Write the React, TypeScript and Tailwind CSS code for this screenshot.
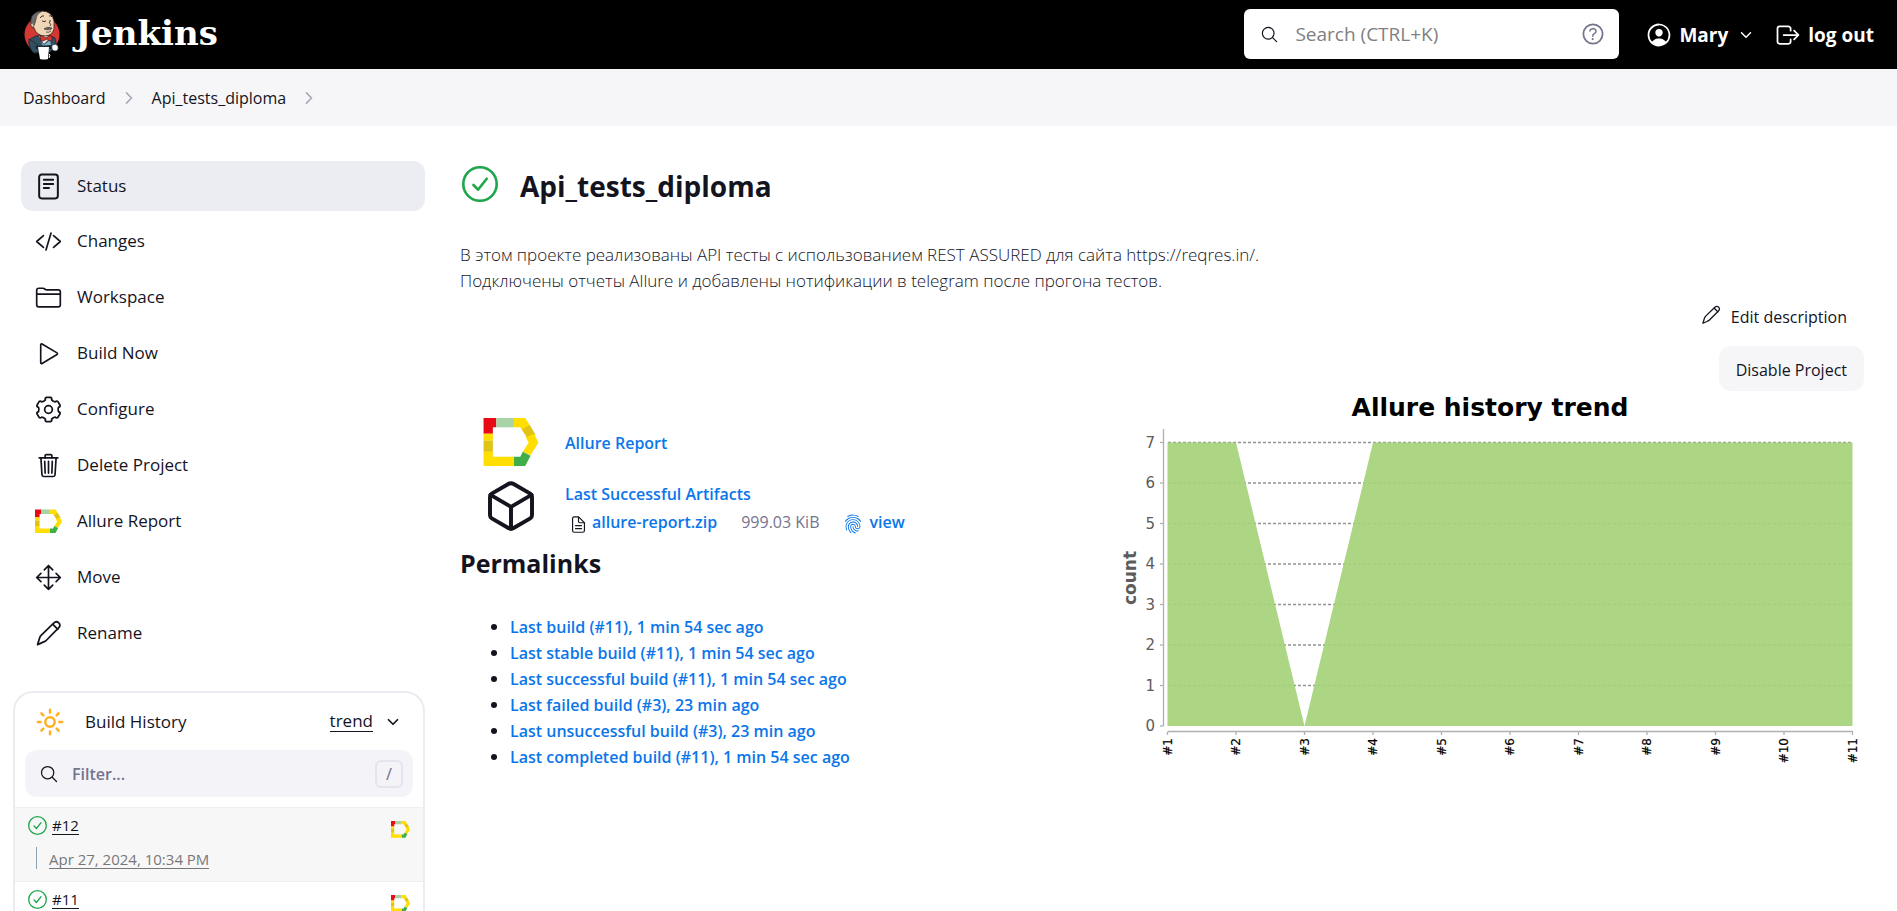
import type { ComponentType, ReactNode } from "react";
import {
  IoChevronDown,
  IoChevronForward,
  IoCodeSlashOutline,
  IoCubeOutline,
  IoDocumentTextOutline,
  IoFingerPrintOutline,
  IoFolderOutline,
  IoHelpCircleOutline,
  IoLogOutOutline,
  IoMoveOutline,
  IoPersonCircleOutline,
  IoSearchOutline,
  IoSunnyOutline,
  IoTrashOutline,
} from "react-icons/io5";

type IconProps = { className?: string };

function JenkinsMascot({ className }: IconProps) {
  return (
    <svg viewBox="0 0 36 50" className={className} aria-hidden="true">
      <ellipse cx="18" cy="24.500" rx="17.500" ry="18" fill="#d33833" />
      <path d="M6 29 L12 26 L24 25 L31 28 L33 37 L28 40 L26 42 L10 43 L5 33 Z" fill="#335061" stroke="#1b2a33" strokeWidth="0.800" />
      <path d="M5 29 Q4 38 10 43 L14 42 L14 35 Z" fill="#335061" stroke="#1b2a33" strokeWidth="0.800" />
      <path d="M15 26 L20 34 L28 26 Z" fill="#f0e6dc" />
      <path d="M17 31 L20 35 L26 30 L27 35 L19 37 Z" fill="#81b0c4" />
      <path d="M8 14 Q8 3 18 1 Q28 1 30 11 L30 19 Q28 26 21 26 Q13 26 10 18 Z" fill="#f0d6b7" stroke="#2b2420" strokeWidth="0.800" />
      <path d="M9 18 Q5 13 8 6 Q12 1 18 1 Q12 4 12 9 L11 13 Z" fill="#6d6b6d" stroke="#2b2420" strokeWidth="0.600" />
      <path d="M8 13 Q6 13 7 16 Q9 18 10 17" fill="#f0d6b7" stroke="#2b2420" strokeWidth="0.700" />
      <path d="M16 8 Q18 5 20 6 M25 6 Q27 5 28 7 M18 11 Q20 12 22 11 M25 11 L27 11 M25 12 Q28 15 26 16" fill="none" stroke="#2b2420" strokeWidth="0.900" />
      <path d="M20 19 Q23 16 28 18 Q27 21 20 19 Z" fill="#6d6b6d" stroke="#2b2420" strokeWidth="0.600" />
      <path d="M22 22 Q25 23 27 21" fill="none" stroke="#2b2420" strokeWidth="0.700" />
      <path d="M16 26 Q20 26 22 28 Q25 25 28 26 L28 31 Q25 31 23 29 Q20 31 17 31 Z" fill="#d33833" stroke="#5c1210" strokeWidth="0.700" />
      <path d="M11 36 L28 35 L30 38 L26 39 L12 39 Z" fill="#1b2a33" />
      <path d="M14 37 L25 37 L24 49 Q20 50 16 49 Z" fill="#ffffff" />
      <path d="M25 44 Q27 44 25 48" fill="none" stroke="#ffffff" strokeWidth="1" />
      <path d="M28 35 Q32 33 34 36 Q35 41 31 41 Q27 41 28 35 Z" fill="#ffffff" stroke="#1b2a33" strokeWidth="0.700" />
    </svg>
  );
}

function StatusIcon({ className }: IconProps) {
  return (
    <svg viewBox="0 0 26 26" className={className} fill="none" stroke="currentColor" strokeLinecap="round" aria-hidden="true">
      <rect x="4" y="1.500" width="18" height="23" rx="2.500" strokeWidth="1.900" />
      <path d="M8.500 6.500h9M8.500 10.500h9M8.500 14.500h5" strokeWidth="1.900" />
    </svg>
  );
}

function PlayIcon({ className }: IconProps) {
  return (
    <svg viewBox="0 0 26 26" className={className} fill="none" stroke="currentColor" strokeWidth="1.600" strokeLinejoin="round" aria-hidden="true">
      <path d="M5.500 4.600v17.200c0 .7.700 1.100 1.300.8l14.400-8.600c.6-.4.600-1.200 0-1.600L6.800 3.800c-.6-.3-1.300.1-1.300.8z" />
    </svg>
  );
}

// Outline of a six-lobed gear, one lobe every 60 degrees.
const gearPath = (() => {
  const at = (deg: number, r: number) => {
    const a = (deg * Math.PI) / 180;
    return `${(13 + r * Math.cos(a)).toFixed(2)} ${(13 + r * Math.sin(a)).toFixed(2)}`;
  };
  const lobes = [0, 1, 2, 3, 4, 5].map((n) => {
    const t = n * 60 - 90;
    return `L${at(t - 18, 9.8)} Q${at(t - 17, 11.8)} ${at(t - 10, 11.8)} L${at(t + 10, 11.8)} Q${at(t + 17, 11.8)} ${at(t + 18, 9.8)} Q${at(t + 30, 8.8)} ${at(t + 42, 9.8)}`;
  });
  return `M${at(-108, 9.8)} ${lobes.join(" ")} Z`;
})();

function GearIcon({ className }: IconProps) {
  return (
    <svg viewBox="0 0 26 26" className={className} fill="none" stroke="currentColor" strokeWidth="1.700" strokeLinejoin="round" aria-hidden="true">
      <path d={gearPath} />
      <circle cx="13" cy="13" r="3.700" />
    </svg>
  );
}

function PencilIcon({ className }: IconProps) {
  return (
    <svg viewBox="0 0 26 26" className={className} fill="none" stroke="currentColor" strokeWidth="1.700" strokeLinecap="round" strokeLinejoin="round" aria-hidden="true">
      <path d="M2.500 23.700l2-6.600c.3-1 .8-1.900 1.600-2.600L18 3c1.500-1.400 3.600-1.500 4.900-.2s1.200 3.400-.2 4.900L11 19.500c-.7.800-1.600 1.300-2.600 1.600z M17 4l5 5" />
    </svg>
  );
}

function AllureIcon({ className }: IconProps) {
  return (
    <svg viewBox="0 0 56 50" className={className} aria-hidden="true">
      <path d="M0 0h13v9.500H9.500V16H0z" fill="#e60b15" />
      <path d="M13 0h18v9.500H13z" fill="#a8d3a6" />
      <path d="M31 0h11.500l4.500 7-7.500 5.500-2-3H31z" fill="#ffde00" />
      <path d="M47 7l6 10-8 4-6-9z" fill="#e0c313" />
      <path d="M51.500 16L56 25 48 38l-8-3.500L46 25l-3-5z" fill="#ffde00" />
      <path d="M40 34.500l8 4L42.500 49H31v-9.500h6.500z" fill="#3fae49" />
      <path d="M0 16h9.500v7H0z" fill="#ffde00" />
      <path d="M0 23h9.500v11.500H0z" fill="#e0c313" />
      <path d="M0 34.500h9.500v5H31V49H0z" fill="#ffde00" />
    </svg>
  );
}

function SuccessIcon({ className, stroke }: IconProps & { stroke: number }) {
  return (
    <svg viewBox="0 0 36 36" className={className} fill="none" stroke="#1ea64b" strokeWidth={stroke} strokeLinecap="round" strokeLinejoin="round" role="img" aria-label="Success">
      <circle cx="18" cy="18" r="16.700" />
      <path d="M11.500 19l4.500 4.700 8.700-11" />
    </svg>
  );
}

const tasks: { label: string; icon: ComponentType<IconProps> }[] = [
  { label: "Status", icon: StatusIcon },
  { label: "Changes", icon: IoCodeSlashOutline },
  { label: "Workspace", icon: IoFolderOutline },
  { label: "Build Now", icon: PlayIcon },
  { label: "Configure", icon: GearIcon },
  { label: "Delete Project", icon: IoTrashOutline },
  { label: "Allure Report", icon: AllureIcon },
  { label: "Move", icon: IoMoveOutline },
  { label: "Rename", icon: PencilIcon },
];

const permalinks = [
  "Last build (#11), 1 min 54 sec ago",
  "Last stable build (#11), 1 min 54 sec ago",
  "Last successful build (#11), 1 min 54 sec ago",
  "Last failed build (#3), 23 min ago",
  "Last unsuccessful build (#3), 23 min ago",
  "Last completed build (#11), 1 min 54 sec ago",
];

const counts = [7, 7, 0, 7, 7, 7, 7, 7, 7, 7, 7];

function TrendChart() {
  const x = (i: number) => 55.5 + i * 68.5;
  const y = (v: number) => 335 - v * 40.5;
  const area = `M${x(0)} ${y(0)} ${counts.map((v, i) => `L${x(i)} ${y(v)}`).join(" ")} L${x(10)} ${y(0)} Z`;
  return (
    <svg viewBox="0 0 752 380" className="w-full max-w-[752px]" role="img" aria-label="Allure history trend" fontFamily="'DejaVu Sans', sans-serif">
      <text x="378" y="25" textAnchor="middle" fontSize="25" fontWeight="700" fill="#000">
        Allure history trend
      </text>
      {counts.slice(0, 7).map((_, i) => (
        <path key={i} d={`M56 ${y(i + 1)}H740`} stroke="#949494" strokeWidth="1.300" strokeDasharray="3 2" />
      ))}
      <path d={area} fill="#a5d279" fillOpacity="0.920" />
      <path d="M51.500 38V335M56 340.500H741" stroke="#b0b0b0" strokeWidth="1.300" fill="none" />
      {[0, 1, 2, 3, 4, 5, 6, 7].map((v) => (
        <g key={v}>
          <path d={`M48 ${y(v)}H51.500`} stroke="#b0b0b0" strokeWidth="1.300" />
          <text x="43" y={y(v) + 5} textAnchor="end" fontSize="15" fill="#5c5c5c">
            {v}
          </text>
        </g>
      ))}
      {counts.map((_, i) => (
        <g key={i}>
          <path d={`M${x(i)} 340.500v3.500`} stroke="#b0b0b0" strokeWidth="1.300" />
          <text transform={`translate(${x(i) + 4} 347) rotate(-90)`} textAnchor="end" fontSize="12" fill="#000" stroke="#000" strokeWidth="0.200">
            #{i + 1}
          </text>
        </g>
      ))}
      <text transform="translate(24 187) rotate(-90)" textAnchor="middle" fontSize="17" fontWeight="700" fill="#5c5c5c">
        count
      </text>
    </svg>
  );
}

function BlueLink({ children }: { children: ReactNode }) {
  return (
    <a href="#" className="text-base leading-[26px] font-semibold text-[#0b76ea]">
      {children}
    </a>
  );
}

export default function App() {
  return (
    <div className="h-screen overflow-hidden bg-white font-['Open_Sans','Noto_Sans',sans-serif] text-[17px] leading-[26px] text-[#14141f]">
      <header className="flex h-[69px] items-center bg-black pr-[23px] pl-6 text-white">
        <a href="#" className="flex items-center gap-[15px]">
          <JenkinsMascot className="h-[50px] w-9" />
          <span className="pb-1 font-['DejaVu_Serif',serif] text-[34px] leading-10 font-bold">Jenkins</span>
        </a>
        <div className="mb-px ml-auto flex h-[50px] w-[375px] items-center rounded-md bg-white pr-3 pl-4 text-[#14141f]">
          <IoSearchOutline className="size-[19px] shrink-0" />
          <input
            type="search"
            aria-label="Search"
            placeholder="Search (CTRL+K)"
            className="ml-4 min-w-0 flex-1 text-[19px] outline-none placeholder:text-[#808080]"
          />
          <a href="#" aria-label="Help">
            <IoHelpCircleOutline className="size-7 text-[#74748f]" />
          </a>
        </div>
        <a href="#" className="ml-[26px] flex items-center gap-1.5 text-[19px] font-bold">
          <IoPersonCircleOutline className="size-7" />
          Mary
        </a>
        <button type="button" aria-label="User menu" className="ml-2.5">
          <IoChevronDown className="size-4" />
        </button>
        <a href="#" className="ml-5 flex items-center gap-1.5 text-[19px] font-bold">
          <IoLogOutOutline className="size-7" />
          log out
        </a>
      </header>

      <nav aria-label="Breadcrumbs" className="flex h-[57px] items-center bg-[#f6f6f8] px-[23px] text-base">
        <a href="#">Dashboard</a>
        <IoChevronForward className="mx-3.5 size-[18px] text-[#a9a9bd]" />
        <a href="#">Api_tests_diploma</a>
        <IoChevronForward className="mx-3.5 size-[18px] text-[#a9a9bd]" />
      </nav>

      <div className="grid grid-cols-[425px_minmax(0,1fr)] gap-x-[35px] pt-[35px] pr-[33px]">
        <aside>
          <nav aria-label="Tasks" className="flex flex-col gap-1.5 pl-[21px]">
            {tasks.map(({ label, icon: Icon }, i) => (
              <a
                key={label}
                href="#"
                className={i === 0 ? "flex h-[50px] items-center gap-[15px] rounded-xl bg-[#ecedf3] px-3.5" : "flex h-[50px] items-center gap-[15px] rounded-xl px-3.5 pb-0.5"}
              >
                <Icon className="size-[27px]" />
                {label}
              </a>
            ))}
          </nav>

          <section className="mt-8 ml-[13px] rounded-t-[20px] border-2 border-b-0 border-[#ebebf2]">
            <div className="flex h-[57px] items-center pr-[22px] pl-5">
              <IoSunnyOutline className="size-[30px] text-[#ffaf1f] [&_*]:stroke-[42px]" />
              <h2 className="ml-5">Build History</h2>
              <a href="#" className="ml-auto border-b border-[#14141f] leading-5">
                trend
              </a>
              <button type="button" aria-label="Collapse" className="ml-3">
                <IoChevronDown className="size-4 [&_*]:stroke-[56px]" />
              </button>
            </div>
            <div className="mx-2.5 flex h-[47px] items-center rounded-xl bg-[#f3f3f8] px-2.5">
              <IoSearchOutline className="ml-1 size-5 shrink-0" />
              <input
                type="search"
                aria-label="Filter builds"
                placeholder="Filter..."
                className="ml-[13px] min-w-0 flex-1 text-base font-semibold outline-none placeholder:text-[#74748f]"
              />
              <kbd className="flex size-7 items-center justify-center rounded-md border-2 border-[#e4e4ee] font-sans text-base text-[#74748f]">/</kbd>
            </div>
            <table className="mt-2.5 w-full text-[15px]">
              <tbody>
                <tr className="h-[74px] border-t border-[#efeff2] bg-[#f7f7f7]">
                  <td className="pt-2 pl-[13px] align-top leading-5">
                    <div className="flex items-center gap-[5px]">
                      <SuccessIcon className="size-[19px]" stroke={2.5} />
                      <a href="#" className="border-b border-[#14141f] leading-[18px]">
                        #12
                      </a>
                    </div>
                    <div className="mt-3 ml-2 flex h-[22px] border-l border-[#8ba3b5] pl-3">
                      <a href="#" className="h-[22px] border-b border-[#777] leading-6 text-[#777]">
                        Apr 27, 2024, 10:34 PM
                      </a>
                    </div>
                  </td>
                  <td className="w-8 pt-3 align-top">
                    <a href="#" aria-label="Allure Report">
                      <AllureIcon className="size-[19px]" />
                    </a>
                  </td>
                </tr>
                <tr className="h-[74px] border-t border-[#efeff2]">
                  <td className="pt-2 pl-[13px] align-top leading-5">
                    <div className="flex items-center gap-[5px]">
                      <SuccessIcon className="size-[19px]" stroke={2.5} />
                      <a href="#" className="border-b border-[#14141f] leading-[18px]">
                        #11
                      </a>
                    </div>
                  </td>
                  <td className="w-8 pt-3 align-top">
                    <a href="#" aria-label="Allure Report">
                      <AllureIcon className="size-[19px]" />
                    </a>
                  </td>
                </tr>
              </tbody>
            </table>
          </section>
        </aside>

        <main>
          <div className="flex h-[50px] items-center gap-[22px] pl-0.5">
            <SuccessIcon className="mb-1 size-9" stroke={2.6} />
            <h1 className="text-[28px] leading-10 font-bold">Api_tests_diploma</h1>
          </div>
          <p className="mt-[31px] font-light">
            В этом проекте реализованы API тесты с использованием REST ASSURED для сайта https://reqres.in/.
            <br />
            Подключены отчеты Allure и добавлены нотификации в telegram после прогона тестов.
          </p>
          <div className="flex flex-col items-end text-base">
            <a href="#" className="mb-[7px] flex h-[45px] items-center gap-2.5 pr-[17px]">
              <PencilIcon className="mb-1 size-5" />
              Edit description
            </a>
            <button type="button" className="h-[45px] rounded-xl bg-[#f6f6f8] px-[17px] pt-0.5">
              Disable Project
            </button>
          </div>

          <div className="flex justify-between gap-10">
            <div className="shrink-0">
              <div className="mt-[27px] grid grid-cols-[82px_auto] items-center pl-[23px]">
                <AllureIcon className="h-[49px] w-14" />
                <BlueLink>Allure Report</BlueLink>
              </div>
              <div className="mt-2.5 grid grid-cols-[82px_auto] items-center pl-[23px]">
                <IoCubeOutline className="size-14 [&_*]:stroke-[36px]" />
                <div className="pt-1">
                  <BlueLink>Last Successful Artifacts</BlueLink>
                  <div className="mt-0.5 flex items-center pl-1">
                    <IoDocumentTextOutline className="mt-1 mr-1 size-[19px]" />
                    <BlueLink>allure-report.zip</BlueLink>
                    <span className="mx-6 text-base leading-[26px] text-[#74748f]">999.03 KiB</span>
                    <IoFingerPrintOutline className="mt-1 mr-1.5 size-5 text-[#0b76ea]" />
                    <BlueLink>view</BlueLink>
                  </div>
                </div>
              </div>
              <h2 className="mt-2.5 text-[25px] leading-9 font-bold">Permalinks</h2>
              <ul className="mt-[33px] list-disc pl-[50px]">
                {permalinks.map((text) => (
                  <li key={text}>
                    <BlueLink>{text}</BlueLink>
                  </li>
                ))}
              </ul>
            </div>
            <TrendChart />
          </div>
        </main>
      </div>
    </div>
  );
}
